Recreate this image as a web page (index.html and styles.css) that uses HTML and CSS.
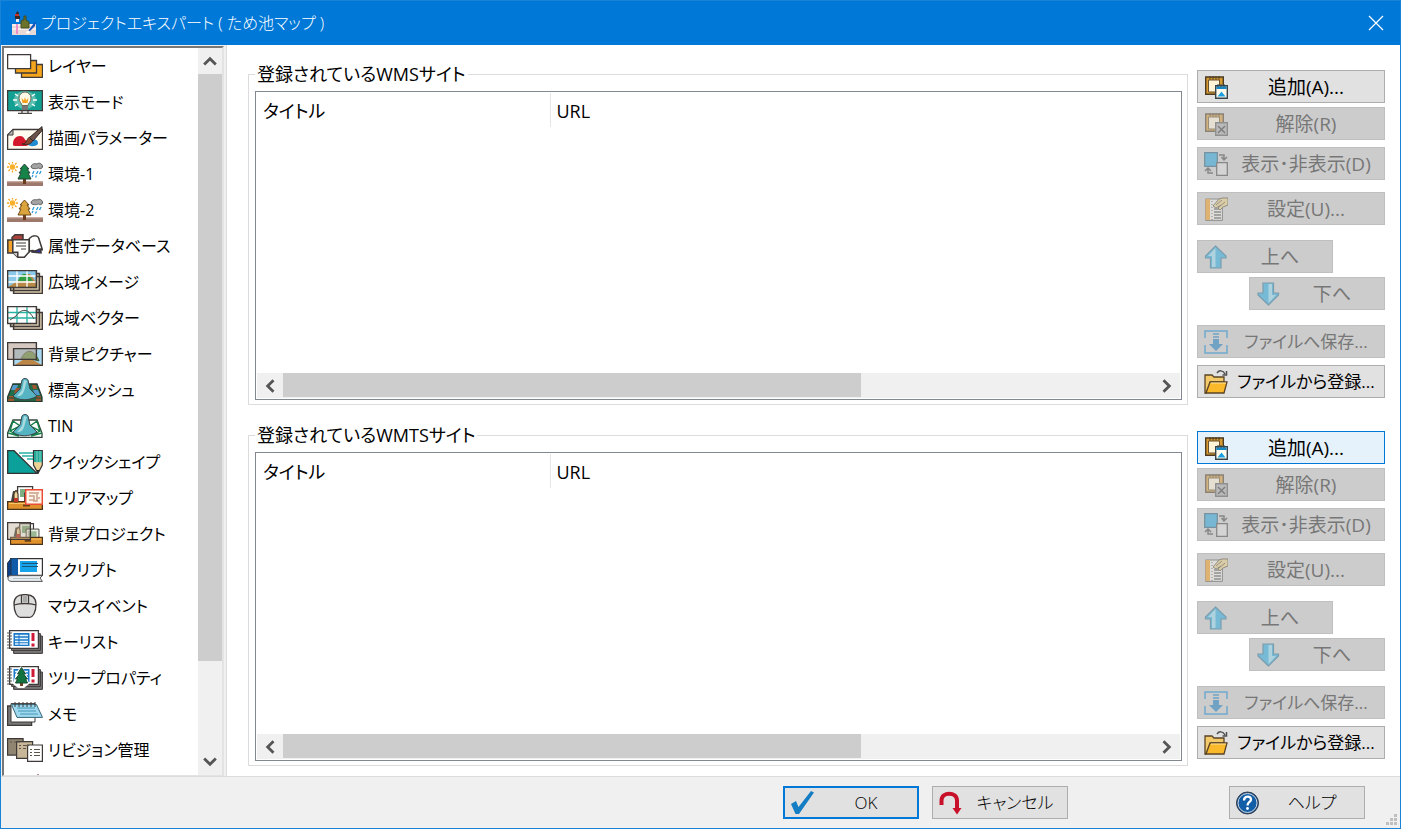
FILE: index.html
```html
<!DOCTYPE html>
<html lang="ja">
<head>
<meta charset="utf-8">
<meta name="viewport" content="width=device-width, initial-scale=1">
<title>プロジェクトエキスパート</title>
<link rel="stylesheet" href="styles.css">
</head>
<body>
<svg class="sprite" aria-hidden="true">
  <symbol id="layers" viewBox="0 0 36 24"><g stroke="#3f3a38" stroke-width="1.3"><path d="M14.500 10.500h21v13h-21z" fill="#f5a51c"/><path d="M8.500 6.500h21v12.500h-21z" fill="#f5a51c"/><path d="M.6.600h23v14h-23z" fill="#fff"/></g></symbol>
  <symbol id="bulb" viewBox="0 0 36 24"><path d="M.6.600h34.800v20H.6z" fill="#12a093" stroke="#3f3a38" stroke-width="1.300"/><ellipse cx="18" cy="10" rx="11" ry="9" fill="#7dccbf" opacity=".7"/><path d="M6 10h4M26 10h4M8 4l3 2M28 4l-3 2M8 16l3-2M28 16l-3-2" stroke="#fff" stroke-width="1.500"/><path d="M15 15.500c0-2-3-3.500-3-7.500a6 6 0 0 1 12 0c0 4-3 5.500-3 7.500z" fill="#fffbe8" stroke="#6a6a5a"/><path d="M15.500 13l-1-5 2.500 2.500L18 7l1 3.500L21.500 8l-1 5z" fill="#f4a01c"/><path d="M15 16h6v4h-6z" fill="#777"/><path d="M11 23.300h14M15 21v2M21 21v2" stroke="#4b4642" stroke-width="1.300"/></symbol>
  <symbol id="brush" viewBox="0 0 36 24"><path d="M6 3.500h29.500v20H.6V9z" fill="#fff9ee" stroke="#3f3a38" stroke-width="1.300"/><path d="M6 3.500V9H.6z" fill="#bbb" stroke="#3f3a38"/><path d="M6 18c0-5 3-8 7-8 5 0 4 5 8 5 3 0 2 5-3 5H9c-3 0-3-1-3-2z" fill="#d3182b"/><path d="M21 18c1-6 10-6 10-1 0 4-10 4-10 1z" fill="#238bd0"/><path d="M15 18c6 0 4-6 8-7l3 3c-2 5-7 5-11 4z" fill="#8a4a32" stroke="#3f2a20"/><path d="M22.500 11.500L35 .6v4L26 15z" fill="#6b5147" stroke="#2f2a28"/></symbol>
  <symbol id="weather" viewBox="0 0 36 24"><path d="M0 19.500h36V24H0z" fill="#9d796d"/><path d="M0 20h36" stroke="#c09a88"/><circle cx="5.500" cy="5" r="2.800" fill="#f9b02c"/><path d="M5.500-.5v2M5.500 8.500v2M0 5h2M9 5h2M1.500 1l1.500 1.500M9.500 1L8 2.500M1.500 9L3 7.500M9.500 9L8 7.500" stroke="#f9a51e" stroke-width="1.300"/><path d="M24 5c0-3 4-4 6-3 2-2 6 0 5.500 3-.5 2-3 2-4 1-2 1-7 1-7.500-1z" fill="#a3a3a3" stroke="#444" stroke-width=".8"/><path d="M27 9l-1.500 3M31 9l-1.500 3M34 9l-1.500 3M26 13l-1 2M29.500 13.500l-1 2" stroke="#2b9bdc" stroke-width="1.300"/></symbol>
  <symbol id="env1" viewBox="0 0 36 24"><use href="#weather"/><path d="M16 17h3v5h-3z" fill="#6c3c20"/><path d="M17.500 2L22 7h-2l3 4h-2l3 6H11l3-6h-2l3-4h-2z" fill="#168348" stroke="#234534"/></symbol>
  <symbol id="env2" viewBox="0 0 36 24"><use href="#weather"/><path d="M16 17h3v5h-3z" fill="#6c3c20"/><path d="M17.500 2L22 7h-2l3 4h-2l3 6H11l3-6h-2l3-4h-2z" fill="#dca43c" stroke="#6f4b1d"/></symbol>
  <symbol id="database" viewBox="0 0 36 24"><g stroke="#3f3a38" stroke-width="1.500"><path d="M.8 6h5v13h-5z" fill="#f4a229"/><path d="M5 3.500L8 .8h8V6H5z" fill="#a8433e"/><path d="M22 8l12 4v7l-9-1z" fill="#3030a0"/><path d="M5.800 5.800h16.500v12l-5 5.500h-6.500l-5-5z" fill="#fff"/><path d="M5.800 18.300h5v5" fill="#ccc"/><path d="M22.300 4.500c4-4 9-3 9.500 0l3.500 11c-4-2-6 3-9 1-3 0-4 1-4 1z" fill="#fff"/></g><path d="M9 9h10M9 12h10M14 15h5" stroke="#3f3a38"/></symbol>
  <symbol id="stack" viewBox="0 0 36 24"><path d="M6.600 6.600h28.800v16.800H6.600zM3.600 3.600h28.800v16.800H3.600z" fill="#d6c7aa" stroke="#3f3a38" stroke-width="1.500"/></symbol>
  <symbol id="wide-image" viewBox="0 0 36 24"><use href="#stack"/><path d="M.6.600h28.800v16.800H.6z" fill="#8ac9e9"/><path d="M1 17l11-7 6-6 5 0 6 8v5z" fill="#b98947"/><path d="M11 11c3-9 9-10 15 0z" fill="#329c43"/><path d="M10 1v16M20 1v16M1 6h28M1 12h28" stroke="#fff" stroke-width="1.300"/><path d="M.6.600h28.800v16.800H.6z" fill="none" stroke="#3f3a38" stroke-width="1.500"/></symbol>
  <symbol id="wide-vector" viewBox="0 0 36 24"><use href="#stack"/><path d="M.6.600h28.800v16.800H.6z" fill="#fff"/><path d="M10 1v16M20 1v16M1 6.500h28M1 12h28" stroke="#28b2a2" stroke-width="1.300"/><path d="M3 14l6-4c6-8 12-8 18 3" fill="none" stroke="#4f4945"/><path d="M.6.600h28.800v16.800H.6z" fill="none" stroke="#3f3a38" stroke-width="1.500"/></symbol>
  <symbol id="picture" viewBox="0 0 36 24"><path d="M6.600 6.600h28.800v16.800H6.600z" fill="#a9d9f1"/><path d="M8 23l9-6 9 1 9 5z" fill="#bd8748"/><path d="M14 17c5-11 13-10 18 2-6-2-12-2-18-2z" fill="#559b3e" stroke="#3f5237"/><path d="M.6.600h28.800v16.800H.6z" fill="#b8a396" fill-opacity=".6" stroke="#3f3a38" stroke-width="1.400"/><path d="M6.600 6.600h28.800v16.800H6.600z" fill="none" stroke="#3f3a38" stroke-width="1.400"/></symbol>
  <symbol id="mesh" viewBox="0 0 36 24"><path d="M6 6h24l5 13v4.400H.6V19z" fill="#216e4a" stroke="#263b31" stroke-width="1.300"/><path d="M6 7h5l-2 5H4zM26 12h5l2 5h-5z" fill="#5699cd"/><path d="M2 18h5v5H1zM9 10h5l-2 5H7zM29 18h5v5h-5zM25 7h4l1 4h-4z" fill="#9e542f"/><path d="M1 20h34" stroke="#1b543b"/><path d="M15 2c1-2 5-2 6 0l2 9 7 7c-7 5-19 5-24 0l7-7z" fill="#56b3c1" stroke="#3a4549"/><path d="M17 2l-2 10-5 6c8 1 7-8 10-15z" fill="#a7dbe0"/></symbol>
  <symbol id="tin" viewBox="0 0 36 24"><path d="M6 6h24l5 13v4.400H.6V19z" fill="#fff" stroke="#34453d" stroke-width="1.300"/><path d="M6 7l7 5-10 5 9 5L1 19M30 7l-7 5 10 5-9 5 11-3M6 7L3 17M30 7l3 10M4 20h28" fill="none" stroke="#138048" stroke-width="1.400"/><path d="M15 2c1-2 5-2 6 0l2 9 7 7c-7 5-19 5-24 0l7-7z" fill="#56b3c1" stroke="#3a4549"/><path d="M17 2l-2 10-5 6c8 1 7-8 10-15z" fill="#a7dbe0"/></symbol>
  <symbol id="shape" viewBox="0 0 36 24"><path d="M.7.700H7l23 22.700H.7z" fill="#0ba099" stroke="#333" stroke-width="1.300"/><path d="M12 3h14M15 6h11M20 9h7" stroke="#5bc3b8" stroke-width="2"/><path d="M26.500.6h8.800V15L31 23.400 26.500 15z" fill="#efd395" stroke="#333" stroke-width="1.200"/><path d="M27 1h8v11h-8z" fill="#25a895"/><path d="M30 1v12M33 1v12" stroke="#7ad3c5"/><path d="M29.500 20h3L31 23.400z" fill="#222"/></symbol>
  <symbol id="drawer" viewBox="0 0 36 24"><path d="M10.600.6h15V16h-15z" fill="#fff" stroke="#3f3a38" stroke-width="1.300"/><path d="M13 3h10v8H13z" fill="#7daf82"/><path d="M17.600 6.600h14V20h-14z" fill="#e9eee6" stroke="#3f3a38"/><path d="M20 9h9v6h-9z" fill="#9bb895"/><path d="M.6 15.600h34.800v7.800H.6z" fill="#df922b" stroke="#4b321b" stroke-width="1.300"/><path d="M2 17.500h32" stroke="#f9c568"/><path d="M16 19.500h7" stroke="#69421d" stroke-width="2"/><path d="M4 15l2-10 2 0 2 10z" fill="#454545"/><path d="M7 16V8l2-4 2 4v8z" fill="#ead79f" stroke="#4b321b"/><path d="M7 12h4v4H7z" fill="#bf372b"/></symbol>
  <symbol id="area-map" viewBox="0 0 36 24"><use href="#drawer"/><path d="M18.700 3.700h16.600v14.600H18.700z" fill="#fff5e9" stroke="#eb4b37" stroke-width="1.500"/><path d="M22 7h10M22 10h5v4h-5M30 8v7h-4M31 12h2" fill="none" stroke="#ca9f8a" stroke-width="1.500"/></symbol>
  <symbol id="bg-project" viewBox="0 0 36 24"><use href="#drawer" x="3" y="0" width="33" height="24"/><path d="M.6.600h22.800v16.800H.6z" fill="#b8a78f" fill-opacity=".4" stroke="#3f3a38" stroke-width="1.300"/></symbol>
  <symbol id="script" viewBox="0 0 36 24"><path d="M3.600.6h31.800v16.800H3.600z" fill="#fff" stroke="#333" stroke-width="1.200"/><path d="M3 .6h8V19H3z" fill="#115caa"/><path d="M4 .6L.6 5v14L4 17z" fill="#0c418c" stroke="#234"/><path d="M13 3h17v11H13z" fill="#15a3e9"/><path d="M15 5.500h16M15 8.500h16" stroke="#1b5678"/><path d="M4 17.600h31.400L33 20l2.400 3.400H4c-4 0-4-6 0-5.800z" fill="#e8edf1" stroke="#555"/><path d="M6 20.500h26" stroke="#b5c3cb"/></symbol>
  <symbol id="mouse" viewBox="0 0 36 24"><path d="M7 10C7 4 10 .6 18 .6S29 4 29 10c0 8-3 13.400-7 13.400h-8C10 23.400 7 18 7 10z" fill="#dededf" stroke="#3f3a38" stroke-width="1.300"/><path d="M7 11c6-2 16-2 22 0M14.500 1v8.500M21.500 1v8.500" fill="none" stroke="#3f3a38" stroke-width="1.300"/><path d="M16 1.500h4V8h-4z" fill="#aaa"/></symbol>
  <symbol id="notes" viewBox="0 0 36 24"><path d="M6.600 6h28.800v17.400H6.600z" fill="#777" stroke="#3f3a38"/><path d="M4.600 3.600h28.800v16.800H4.600z" fill="#777" stroke="#3f3a38"/><path d="M2.600.6h28.800v17.800H2.600z" fill="#fff" stroke="#3f3a38" stroke-width="1.300"/><path d="M0 3h5M0 6h5M0 9h5M0 12h5M0 15h5M0 18h4" stroke="#555"/><path d="M6.500 3h16v13h-16z" fill="#1b78c9"/><path d="M8 5.500h3.500M12.500 5.500H21M8 8.500h3.500M12.500 8.500H21M8 11.500h3.500M12.500 11.500H21M8 14h3.500M12.500 14H21" stroke="#e8f5ff" stroke-width="1.400"/><path d="M26 3v8M26 13.500V16.500" stroke="#ce1a37" stroke-width="3"/></symbol>
  <symbol id="tree-notes" viewBox="0 0 36 24"><use href="#notes"/><path d="M14 0l5 7 3 11-5 4h-6l-5-4L9 7z" fill="#fff"/><path d="M13 16h3v4h-3z" fill="#704226"/><path d="M14.500 1.500l4 6.500h-2l4 5h-2l2 4h-12l2-4h-2l4-5h-2z" fill="#11743e" stroke="#174b30"/></symbol>
  <symbol id="memo" viewBox="0 0 36 24"><path d="M.6 4h24v19.400H.6z" fill="#777" stroke="#3f3a38" stroke-width="1.300"/><path d="M4 1.600h24V20H4z" fill="#fff" stroke="#3f3a38"/><path d="M4.500 2.600h25l6 12.800H10z" fill="#9ed9f0" stroke="#376777"/><path d="M10 6h18M11 9h18M13 12h18" stroke="#4696b4"/><path d="M8 0v5M12 0v5M16 0v5M20 0v5M24 0v5M28 0v5" stroke="#3f3a38"/></symbol>
  <symbol id="revision" viewBox="0 0 36 24"><g stroke="#3f3a38" stroke-width="1.200"><path d="M.6.600h15.500v16.500H.6z" fill="#8f8571"/><path d="M9.600 3.600h16v16.800h-16z" fill="#c7b798"/><path d="M20.600 7h14.800v16.400H20.600z" fill="#fff"/></g><path d="M3 4h2M7 4h6M12 7.500h2M16 7.500h6M12 10.500h2M16 10.500h3M23 11.500h2M27 11.500h6M23 14.500h2M27 14.500h6M23 17.500h2M27 17.500h6" stroke="#5b554b"/></symbol>
  <symbol id="next" viewBox="0 0 36 24"><path d="M31 0l5 5H26z" fill="#5b2f2b"/></symbol>
  <symbol id="clipboard" viewBox="0 0 24 24"><path d="M1.700 2h17.600v17.300H1.700z" fill="#d99a31" stroke="#4b3b22" stroke-width="1.400"/><path d="M4.500 5h11v12h-11z" fill="#fff3d8" stroke="#69522d"/><path d="M6 1v3.500M9 1v3.500M12 1v3.500M15 1v3.500" stroke="#4b3b22"/></symbol>
  <symbol id="add" viewBox="0 0 24 24"><use href="#clipboard"/><path d="M11.700 10.700h11.600v12.600H11.700z" fill="#fffced" stroke="#37444c" stroke-width="1.400"/><path d="M12.400 11.400h10.200V14H12.400z" fill="#1687c5"/><path d="M13.500 21.500l4-5 4 5z" fill="#1aa0e0"/><path d="M14 9v3M17 9v3M20 9v3" stroke="#37444c"/></symbol>
  <symbol id="remove" viewBox="0 0 24 24"><use href="#clipboard"/><path d="M11.700 10.700h11.600v12.600H11.700z" fill="#aaa" stroke="#555" stroke-width="1.400"/><path d="M14 14l7 7M21 14l-7 7" stroke="#333" stroke-width="1.500"/></symbol>
  <symbol id="swap" viewBox="0 0 24 24"><path d="M.7.700h12.600v13.600H.7z" fill="#25a4dc" stroke="#235a77" stroke-width="1.300"/><path d="M12.700 10.700h10.600v12.600H12.700z" fill="#ddd" stroke="#444" stroke-width="1.300"/><path d="M15 3h5v4M17.500 5L20 8l3-3M9 21H4v-4M1 19l3-3 3 3" fill="none" stroke="#444" stroke-width="1.500"/></symbol>
  <symbol id="settings" viewBox="0 0 24 24"><path d="M1.600 2h16.800v21.400H1.600z" fill="#f0eee9" stroke="#555"/><path d="M1.500 2H6v21H1.500z" fill="#f09a18"/><path d="M8 4v19" stroke="#444" stroke-dasharray="1 2"/><path d="M10 12h7M10 15h7M10 18h7M10 21h7" stroke="#555" stroke-width="1.300"/><path d="M9 9l6-7 3-1h6v7l-5 2-3 3-2-2 3-3-5 3z" fill="#e7ce83" stroke="#5c513b"/><path d="M12 8l6-5M15 10l6-5" stroke="#655735"/></symbol>
  <symbol id="up" viewBox="0 0 24 24"><path d="M11.500 1l10.500 10v2h-5v10H6.500V13h-5v-2z" fill="#25a9df" stroke="#2f6f90" stroke-width="1.200"/><path d="M11.500 3v19H8V11H4z" fill="#91daf2"/></symbol>
  <symbol id="save" viewBox="0 0 24 24"><path d="M1 8V1h22v7M1 15v8h22v-8" fill="none" stroke="#1989ce" stroke-width="1.500"/><path d="M9 4h6M9 7h6" stroke="#1879bc" stroke-width="1.400"/><path d="M9 9h6v5h4l-7 7-7-7h4z" fill="#1879bc"/></symbol>
  <symbol id="folder" viewBox="0 0 24 24"><path d="M1 5h7l2 2h10v5H7L2 23H1z" fill="#f3c969" stroke="#594426" stroke-width="1.300"/><path d="M6 12h17l-3 11H2z" fill="#fab82b" stroke="#594426" stroke-width="1.300"/><path d="M7 13h15" stroke="#ffe4a0"/><path d="M13 3c2-3 6-3 8 1M22.500 1v4h-4" fill="none" stroke="#505050" stroke-width="1.500"/></symbol>
  <symbol id="check" viewBox="0 0 24 24"><path d="M0 13l5-3 2.500 6L20 0l3 1.500L8 23H4.500z" fill="#147dc4"/></symbol>
  <symbol id="return" viewBox="0 0 24 24"><path d="M2.500 14V9.500c0-9 15.500-9 15.500 0V18" fill="none" stroke="#c9102a" stroke-width="4"/><path d="M13.500 17h9L18 23.500z" fill="#c9102a"/></symbol>
  <symbol id="help" viewBox="0 0 24 24"><circle cx="11.500" cy="12" r="11" fill="#174f8c" stroke="#333e4a"/><circle cx="11.500" cy="12" r="9.500" fill="#125fa8" stroke="#d3d8df"/><path d="M8 9.500c0-5 7-5 7-1 0 2.500-3.500 2.500-3.500 6" fill="none" stroke="#fff" stroke-width="2.300"/><circle cx="11.500" cy="17.500" r="1.400" fill="#fff"/></symbol>
  <symbol id="chevron" viewBox="0 0 12 12"><path d="M1 9l5-5 5 5" fill="none" stroke="#555" stroke-width="2.400"/></symbol>
</svg>

<div class="window">
  <header class="titlebar">
    <svg class="app-icon" viewBox="0 0 24 24" aria-hidden="true"><path d="M0 13h24v11H0z" fill="#e9d9d6"/><path d="M0 14h24M0 18h24" stroke="#fff"/><path d="M4 2l1.500-2L7 2v9H4z" fill="#34292a"/><path d="M3 5h5v3H3z" fill="#34292a"/><path d="M3 3h4v2H3z" fill="#c8352d"/><path d="M4 8h3v3H4z" fill="#eee"/><path d="M5 13v10" stroke="#ed74c5" stroke-width="1.500"/><path d="M10 9h2V5h2v4l3 2v6H9v-6z" fill="#6b722c" stroke="#454a20"/><path d="M16 20l6-8 2-1-1 4-6 6z" fill="#1655bd"/><path d="M14 22c1-3 3-3 4-1-1 2-3 2-4 1z" fill="#fff"/></svg>
    <h1 class="title">プロジェクトエキスパート ( ため池マップ )</h1>
    <button class="close" type="button" aria-label="閉じる"><svg viewBox="0 0 16 16"><path d="M1 1l14 14M15 1L1 15" stroke="#fff" stroke-width="1.200"/></svg></button>
  </header>

  <main class="main">
    <nav class="sidebar" aria-label="項目">
      <ul class="nav-list">
        <li><a class="nav-item" href="#"><svg><use href="#layers"/></svg>レイヤー</a></li>
        <li><a class="nav-item" href="#"><svg><use href="#bulb"/></svg>表示モード</a></li>
        <li><a class="nav-item" href="#"><svg><use href="#brush"/></svg>描画パラメーター</a></li>
        <li><a class="nav-item" href="#"><svg><use href="#env1"/></svg>環境-1</a></li>
        <li><a class="nav-item" href="#"><svg><use href="#env2"/></svg>環境-2</a></li>
        <li><a class="nav-item" href="#"><svg><use href="#database"/></svg>属性データベース</a></li>
        <li><a class="nav-item" href="#"><svg><use href="#wide-image"/></svg>広域イメージ</a></li>
        <li><a class="nav-item" href="#"><svg><use href="#wide-vector"/></svg>広域ベクター</a></li>
        <li><a class="nav-item" href="#"><svg><use href="#picture"/></svg>背景ピクチャー</a></li>
        <li><a class="nav-item" href="#"><svg><use href="#mesh"/></svg>標高メッシュ</a></li>
        <li><a class="nav-item" href="#"><svg><use href="#tin"/></svg>TIN</a></li>
        <li><a class="nav-item" href="#"><svg><use href="#shape"/></svg>クイックシェイプ</a></li>
        <li><a class="nav-item" href="#"><svg><use href="#area-map"/></svg>エリアマップ</a></li>
        <li><a class="nav-item" href="#"><svg><use href="#bg-project"/></svg>背景プロジェクト</a></li>
        <li><a class="nav-item" href="#"><svg><use href="#script"/></svg>スクリプト</a></li>
        <li><a class="nav-item" href="#"><svg><use href="#mouse"/></svg>マウスイベント</a></li>
        <li><a class="nav-item" href="#"><svg><use href="#notes"/></svg>キーリスト</a></li>
        <li><a class="nav-item" href="#"><svg><use href="#tree-notes"/></svg>ツリープロパティ</a></li>
        <li><a class="nav-item" href="#"><svg><use href="#memo"/></svg>メモ</a></li>
        <li><a class="nav-item" href="#"><svg><use href="#revision"/></svg>リビジョン管理</a></li>
        <li class="nav-item" aria-hidden="true"><svg><use href="#next"/></svg></li>
      </ul>
      <div class="vscroll">
        <button class="scroll-btn" type="button" aria-label="上へスクロール"><svg><use href="#chevron"/></svg></button>
        <div class="vtrack"><div class="vthumb"></div></div>
        <button class="scroll-btn down" type="button" aria-label="下へスクロール"><svg><use href="#chevron"/></svg></button>
      </div>
    </nav>

    <div class="content">
      <section class="site">
        <fieldset class="group">
          <legend>登録されているWMSサイト</legend>
          <div class="list">
            <table class="table"><thead><tr><th class="col-title" scope="col">タイトル</th><th scope="col">URL</th></tr></thead></table>
            <div class="hscroll">
              <button class="scroll-btn left" type="button" aria-label="左へスクロール"><svg><use href="#chevron"/></svg></button>
              <div class="htrack"><div class="hthumb"></div></div>
              <button class="scroll-btn right" type="button" aria-label="右へスクロール"><svg><use href="#chevron"/></svg></button>
            </div>
          </div>
        </fieldset>
        <div class="actions">
          <button class="btn" type="button"><svg><use href="#add"/></svg><span>追加(A)...</span></button>
          <button class="btn gap-xs" type="button" disabled><svg><use href="#remove"/></svg><span>解除(R)</span></button>
          <button class="btn gap-s" type="button" disabled><svg><use href="#swap"/></svg><span>表示･非表示(D)</span></button>
          <button class="btn gap-m" type="button" disabled><svg><use href="#settings"/></svg><span>設定(U)...</span></button>
          <button class="btn move gap-l" type="button" disabled><svg><use href="#up"/></svg><span>上へ</span></button>
          <button class="btn move end gap-xs" type="button" disabled><svg class="flip"><use href="#up"/></svg><span>下へ</span></button>
          <button class="btn long gap-l" type="button" disabled><svg><use href="#save"/></svg><span>ファイルへ保存...</span></button>
          <button class="btn long gap-s" type="button"><svg><use href="#folder"/></svg><span>ファイルから登録...</span></button>
        </div>
      </section>

      <section class="site">
        <fieldset class="group">
          <legend>登録されているWMTSサイト</legend>
          <div class="list">
            <table class="table"><thead><tr><th class="col-title" scope="col">タイトル</th><th scope="col">URL</th></tr></thead></table>
            <div class="hscroll">
              <button class="scroll-btn left" type="button" aria-label="左へスクロール"><svg><use href="#chevron"/></svg></button>
              <div class="htrack"><div class="hthumb"></div></div>
              <button class="scroll-btn right" type="button" aria-label="右へスクロール"><svg><use href="#chevron"/></svg></button>
            </div>
          </div>
        </fieldset>
        <div class="actions">
          <button class="btn hot" type="button"><svg><use href="#add"/></svg><span>追加(A)...</span></button>
          <button class="btn gap-xs" type="button" disabled><svg><use href="#remove"/></svg><span>解除(R)</span></button>
          <button class="btn gap-s" type="button" disabled><svg><use href="#swap"/></svg><span>表示･非表示(D)</span></button>
          <button class="btn gap-m" type="button" disabled><svg><use href="#settings"/></svg><span>設定(U)...</span></button>
          <button class="btn move gap-l" type="button" disabled><svg><use href="#up"/></svg><span>上へ</span></button>
          <button class="btn move end gap-xs" type="button" disabled><svg class="flip"><use href="#up"/></svg><span>下へ</span></button>
          <button class="btn long gap-l" type="button" disabled><svg><use href="#save"/></svg><span>ファイルへ保存...</span></button>
          <button class="btn long gap-s" type="button"><svg><use href="#folder"/></svg><span>ファイルから登録...</span></button>
        </div>
      </section>
    </div>
  </main>

  <footer class="footer">
    <button class="btn default" type="button"><svg><use href="#check"/></svg><span>OK</span></button>
    <button class="btn" type="button"><svg><use href="#return"/></svg><span>キャンセル</span></button>
    <button class="btn help" type="button"><svg><use href="#help"/></svg><span>ヘルプ</span></button>
    <svg class="grip" viewBox="0 0 12 12" aria-hidden="true"><path d="M8 0h3v3H8zM4 4h3v3H4zM8 4h3v3H8zM0 8h3v3H0zM4 8h3v3H4zM8 8h3v3H8z" fill="#bfbfbf"/></svg>
  </footer>
</div>
</body>
</html>
```
FILE: styles.css
```css
* { box-sizing: border-box; }

body {
  margin: 0;
  color: #000;
  font-family: "Open Sans", "Noto Sans CJK JP", sans-serif;
  font-size: 18px;
  line-height: 24px;
  font-feature-settings: "palt";
}

button { font: inherit; font-feature-settings: inherit; color: inherit; }

.sprite { position: absolute; width: 0; height: 0; }

.window {
  display: flex;
  flex-direction: column;
  height: 100vh;
  border: 1px solid #1883d7;
  background: #f0f0f0;
}

.titlebar {
  display: flex;
  align-items: center;
  gap: 5px;
  height: 44px;
  padding-left: 11px;
  background: #0078d7;
  color: #fff;
}
.app-icon { width: 24px; height: 24px; }
.title { flex: 1; margin: 0; font-size: 16px; font-weight: 300; }
.close {
  display: grid;
  place-items: center;
  width: 48px;
  height: 44px;
  padding: 0;
  border: 0;
  background: none;
}
.close svg { width: 16px; height: 16px; }

.main { display: flex; flex: 1; min-height: 0; }

.sidebar {
  display: flex;
  width: 222px;
  margin: 1px 2px 0 1px;
  border: 2px solid #e3e3e3;
  border-top-color: #777;
  border-left-color: #777;
  border-bottom-width: 1px;
  background: #fff;
}
.nav-list {
  flex: 1;
  min-width: 0;
  margin: 0;
  padding: 0;
  overflow: hidden;
  list-style: none;
}
.nav-item {
  display: flex;
  align-items: center;
  gap: 5px;
  height: 36px;
  padding-left: 3px;
  color: #000;
  font-size: 16px;
  white-space: nowrap;
  text-decoration: none;
}
.nav-item svg { flex: none; width: 36px; height: 24px; }

.vscroll { display: flex; flex-direction: column; width: 24px; background: #f0f0f0; }
.vtrack { flex: 1; }
.vthumb { height: 87%; background: #cdcdcd; }
.scroll-btn {
  display: grid;
  flex: none;
  place-items: center;
  width: 24px;
  height: 26px;
  padding: 0;
  border: 0;
  background: none;
}
.scroll-btn svg { width: 14px; height: 14px; }
.down svg { transform: rotate(180deg); }
.left svg { transform: rotate(-90deg); }
.right svg { transform: rotate(90deg); }

.content {
  display: flex;
  flex: 1;
  flex-direction: column;
  gap: 18px;
  min-width: 0;
  padding: 17px 15px 10px 21px;
  border-left: 1px solid #dcdcdc;
  background: #fff;
}
.site { display: flex; flex: 1; gap: 9px; min-height: 0; }

.group {
  display: flex;
  flex: 1;
  min-width: 0;
  margin: 0;
  padding: 5px 5px 4px 6px;
  border: 1px solid #dcdcdc;
}
.group legend { padding: 0 2px; }

.list {
  display: flex;
  flex: 1;
  flex-direction: column;
  justify-content: space-between;
  min-width: 0;
  padding: 1px;
  border: 1px solid #828790;
}
.table { width: 100%; border-collapse: collapse; table-layout: fixed; }
.table th {
  height: 34px;
  padding: 2px 6px 0;
  font-weight: 400;
  text-align: left;
}
.table .col-title { width: 293px; border-right: 1px solid #e5e5e5; }

.hscroll { display: flex; height: 25px; background: #f0f0f0; }
.hscroll .scroll-btn { width: 26px; height: 25px; }
.htrack { flex: 1; }
.hthumb { width: 66.4%; height: 24px; background: #cdcdcd; }

.actions { display: flex; flex-direction: column; width: 188px; padding-top: 8px; }

.btn {
  display: flex;
  align-items: center;
  flex: none;
  height: 33px;
  padding: 0 0 0 6px;
  border: 1px solid #adadad;
  background: #e1e1e1;
  font-size: 19px;
  white-space: nowrap;
}
.btn svg { flex: none; width: 24px; height: 24px; }
.btn span { flex: 1; text-align: center; }
.btn:disabled { border-color: #bfbfbf; background: #ccc; color: #777; }
.btn:disabled svg { opacity: .5; }
.btn .flip { transform: rotate(180deg); }
.btn.hot { border-color: #0078d7; background: #e5f1fb; }
.long { font-size: 17px; }
.move { width: 136px; }
.end { align-self: flex-end; }
.gap-xs { margin-top: 4px; }
.gap-s { margin-top: 7px; }
.gap-m { margin-top: 12px; }
.gap-l { margin-top: 15px; }

.footer {
  position: relative;
  display: flex;
  justify-content: flex-end;
  gap: 13px;
  padding: 9px 35px;
  border-top: 1px solid #dcdcdc;
}
.footer .btn { width: 136px; font-size: 17px; font-weight: 300; }
.footer .default { border: 2px solid #0078d7; }
.footer .help { margin-left: 148px; }
.grip { position: absolute; right: 2px; bottom: 2px; width: 12px; height: 12px; }
```
